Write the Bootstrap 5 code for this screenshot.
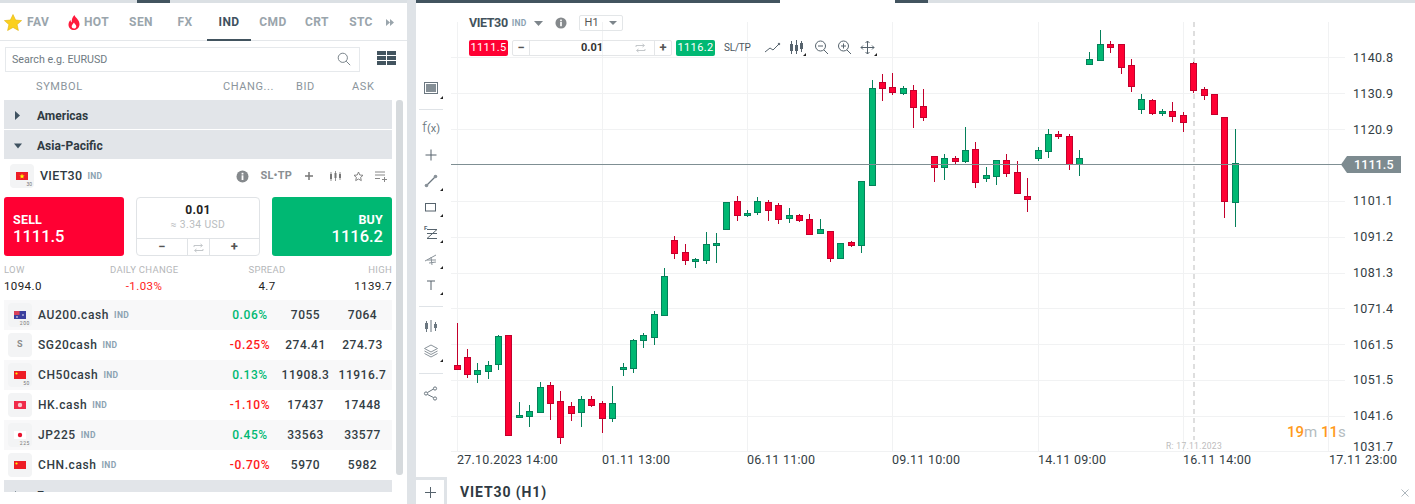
<!DOCTYPE html>
<html lang="en">
<head>
    <meta charset="UTF-8">
    <title>VIET30 (H1)</title>
    <link rel="stylesheet" href="https://cdn.jsdelivr.net/npm/bootstrap@5.3.0/dist/css/bootstrap.min.css">
    <style>
        html, body { height: 504px; overflow: hidden; background: #fff; }
        body { font-family: Roboto, "Liberation Sans", sans-serif; color: #2f3a42; font-size: 12px; }
        .strip { height: 3px; flex: none; }
        .s-light { background: #dbe0e4; }
        .s-dark { background: #42545f; }
        .left-side { width: 407px; flex: none; height: 504px; }
        .gutter { width: 9px; flex: none; background: #dfe3e7; }
        .right-side { width: 999px; flex: none; height: 504px; }

        .tabbar { height: 38px; border-bottom: 1px solid #e4e7ea; }
        .tab-item { height: 38px; font-size: 12px; font-weight: 700; color: #9aa5ac; letter-spacing: .4px; width: 44px; padding: 0; justify-content: center; }
        .tab-item.on { color: #3f5260; border-bottom: 2px solid #42545f; padding-top: 2px; height: 38px; }
        .tab-fav { width: 60px; justify-content: flex-start; padding-left: 4px; gap: 5px; }
        .tab-hot { width: 59px; justify-content: flex-start; padding-left: 8px; gap: 4px; }
        .tab-more { width: 14px; }
        .search-row { height: 31px; padding: 6px 11px 0 5px; }
        .search-box { width: 355px; height: 25px; }
        .search-box .form-control { height: 25px; border-radius: 0; border: 1px solid #e6e9ec; font-size: 10.7px; padding: 0 6px; color: #6c757d; box-shadow: none; }
        .search-box .form-control::placeholder { color: #6f7a82; }
        .search-icon { position: absolute; right: 9px; top: 5px; }
        .col-heads { height: 28px; font-size: 11px; letter-spacing: .6px; color: #8b959c; padding-top: 3px; }
        .head-symbol { width: 223px; padding-left: 36px; }
        .head-change { width: 60px; }
        .head-bid { width: 62px; padding-left: 13px; }
        .head-ask { padding-left: 7px; }

        .list-wrap { height: 392px; padding-left: 4px; overflow: hidden; }
        .list-col { width: 388px; flex: none; }
        .thumb { width: 7px; height: 375px; margin-left: 4px; background: #d6dadd; border-radius: 3px; flex: none; }
        .group-row { height: 29px; margin-bottom: 1px; background: #e2e5e9; font-size: 12px; font-weight: 700; color: #2f3a42; padding: 2px 0 0 10px; }
        .group-row svg { width: 8px; margin-right: 15px; }
        .box-ic { width: 24px; height: 24px; border-radius: 4px; background: #f3f4f5; position: relative; flex: none; display: flex; align-items: center; justify-content: center; color: #8c8c8c; font-size: 9px; font-weight: 700; }
        .box-ic small { position: absolute; right: 2px; bottom: 1px; font-size: 5px; font-weight: 400; color: #777; line-height: 1; }
        .detail-head { height: 30px; margin-bottom: 7px; padding: 2px 0 0 6px; }
        .detail-name { margin-left: 6px; font-size: 12.5px; font-weight: 500; letter-spacing: .3px; }
        .tag { font-size: 8.5px; font-weight: 700; color: #8ba2b2; letter-spacing: .3px; margin-left: 5px; }
        .detail-tools { margin-left: auto; padding-right: 4px; gap: 11px; color: #8a8f93; }
        .sl-tp { font-size: 11px; font-weight: 700; letter-spacing: .2px; color: #8a8f93; }
        .sl-tp + svg { margin-left: 1px; }

        .trade-row { height: 59px; }
        .deal { width: 120px; height: 59px; border: 0; border-radius: 3px; color: #fff; padding: 6px 9px 0; line-height: 1; }
        .deal b { display: block; font-size: 12.5px; font-weight: 700; letter-spacing: .2px; margin-bottom: 3px; }
        .deal span { font-size: 16.5px; font-weight: 500; }
        .deal-sell { background: #ff0033; text-align: left; }
        .deal-buy { background: #00b873; text-align: right; }
        .deal:hover { color: #fff; }
        .deal-sell:hover { background: #ff0033; }
        .deal-buy:hover { background: #00b873; }
        .qty-box { width: 124px; height: 59px; border: 1px solid #e0e3e6; border-radius: 4px; text-align: center; }
        .qty-top { height: 40px; padding-top: 6px; line-height: 1; }
        .qty-top b { display: block; font-size: 12px; font-weight: 700; color: #222; letter-spacing: .3px; margin-bottom: 2px; }
        .qty-top span { font-size: 10.3px; color: #b9bdc0; letter-spacing: .4px; }
        .qty-bottom { height: 17px; border-top: 1px solid #e0e3e6; font-size: 13px; font-weight: 700; color: #555; line-height: 16px; }
        .qty-bottom div:nth-child(1), .qty-bottom div:nth-child(3) { flex: 1; }
        .qty-bottom div:nth-child(2) { width: 23px; border-left: 1px solid #e0e3e6; border-right: 1px solid #e0e3e6; }

        .stats { height: 44px; padding-top: 9px; line-height: 1; }
        .stat-lab { font-size: 9.5px; color: #b5b7b9; letter-spacing: .3px; }
        .stat-val { font-size: 11.5px; color: #222; letter-spacing: .4px; margin-top: 6px; }
        .st-a { width: 106px; }
        .st-b { width: 68px; text-align: center; }
        .st-c { width: 40px; margin-left: 69px; text-align: center; }
        .st-d { width: 105px; text-align: right; }
        .red-txt { color: #ff1a1a; }
        .green-txt { color: #00b873; }

        .quote-row { height: 30px; padding-left: 4px; font-size: 12px; letter-spacing: .6px; color: #333d44; font-weight: 500; }
        .quote-row.tint { background: #f8f8f9; }
        .quote-name { margin-left: 6px; }
        .quote-chg { width: 54px; margin-left: auto; text-align: center; }
        .quote-px { width: 57px; text-align: center; letter-spacing: .5px; }
        .quote-px.last { margin-right: 1px; }

        .chart-row { height: 474px; }
        .tool-col { width: 35px; flex: none; padding: 72px 5px 0 0; }
        .tool-btn { height: 26px; display: flex; align-items: baseline; justify-content: center; color: #6b7780; font-size: 15px; font-weight: 300; }
        .tool-btn svg { align-self: center; flex: none; }
        .tool-btn span { font-size: 11px; font-weight: 400; }
        .tool-line { height: 1px; background: #dfe3e7; margin: 8px 3px 6px 3px; }
        .plot { width: 964px; position: relative; }
        .plot-svg { position: absolute; left: -35px; top: 0; }
        .plot-svg text { font-family: Roboto, "Liberation Sans", sans-serif; }
        .chart-head { position: relative; padding-left: 18px; }
        .head-one { height: 20px; margin-top: 10px; }
        .head-name { font-size: 12.5px; font-weight: 700; letter-spacing: -.4px; color: #43525c; }
        .head-one .tag { margin-left: 4px; }
        .head-caret { margin-left: 7px; }
        .head-info { margin-left: 12px; }
        .tf-select { width: 44px; height: 16px; margin-left: 12px; border: 1px solid #e3e6e8; border-radius: 2px; font-size: 11px; color: #555; padding: 0 5px; }
        .head-two { margin-top: 6px; height: 17px; }
        .pill { width: 39px; height: 16px; border-radius: 2px; color: #fff; font-size: 11px; font-weight: 400; letter-spacing: .4px; text-align: center; line-height: 16px; }
        .pill-red { background: #ff0033; }
        .pill-green { background: #00b873; }
        .qty-strip { width: 160px; height: 16px; margin: 0 4px; border: 1px solid #e4e6e8; border-radius: 2px; font-size: 11px; font-weight: 700; color: #333; line-height: 14px; text-align: center; }
        .qty-strip .side { width: 17px; color: #555; font-size: 13px; }
        .qty-strip .side:first-child { border-right: 1px solid #e4e6e8; }
        .qty-strip .side:last-child { border-left: 1px solid #e4e6e8; }
        .swap-small { position: absolute; right: 8px; top: 2px; }
        .sltp-link { font-size: 10px; letter-spacing: -.2px; color: #4a5660; margin: 0 14px 0 9px; }
        .bottom-row { height: 27px; }
        .plus-tab { width: 31px; height: 27px; border-top: 3px solid #dfe3e7; border-right: 3px solid #dfe3e7; color: #56636d; }
        .bottom-name { margin-left: 13px; padding-top: 5px; font-size: 14px; font-weight: 700; letter-spacing: .9px; color: #2f3a42; }
        .bottom-x { margin-left: auto; margin-right: 6px; padding-top: 6px; color: #aeb7bd; }
    </style>
</head>
<body class="d-flex">

    <!-- left panel -->
    <div class="left-side d-flex flex-column">
        <div class="d-flex flex-none">
            <div class="strip s-light" style="width:137px"></div>
            <div class="strip s-dark" style="width:33px"></div>
            <div class="strip s-light" style="width:237px"></div>
        </div>

        <nav class="nav tabbar flex-nowrap">
            <a class="nav-link tab-item tab-fav d-flex align-items-center" href="#">
                <svg width="18" height="17" viewBox="0 0 18 17"><polygon points="9,0.5 11.6,6 17.6,6.6 13.1,10.6 14.4,16.5 9,13.4 3.6,16.5 4.9,10.6 0.4,6.6 6.4,6" fill="#fbd01e" stroke="#e3b60f" stroke-width=".6"/></svg>FAV</a>
            <a class="nav-link tab-item tab-hot d-flex align-items-center" href="#">
                <svg width="12" height="15" viewBox="0 0 12 15"><path d="M6.5 0c.6 2.6 4.9 4.6 5 9 .1 3.400-2.500 6-5.500 6S.4 12.600.5 9.400C.6 7.400 1.600 6 2.600 5c0 1.200.4 2 1.100 2.400C3.500 4.500 4.600 1.700 6.500 0zM6 7.500C5 9 3.700 10 3.700 11.600c0 1.300 1 2 2.300 2s2.300-.8 2.300-2.100C8.300 10 6.800 9.200 6 7.500z" fill="#ff1a3c"/></svg>HOT</a>
            <a class="nav-link tab-item d-flex align-items-center" href="#">SEN</a>
            <a class="nav-link tab-item d-flex align-items-center" href="#">FX</a>
            <a class="nav-link tab-item on d-flex align-items-center" href="#">IND</a>
            <a class="nav-link tab-item d-flex align-items-center" href="#">CMD</a>
            <a class="nav-link tab-item d-flex align-items-center" href="#">CRT</a>
            <a class="nav-link tab-item d-flex align-items-center" href="#">STC</a>
            <a class="nav-link tab-item tab-more d-flex align-items-center" href="#">
                <svg width="8" height="7" viewBox="0 0 8 7"><path d="M0 0l4 3.500-4 3.500zM4 0l4 3.500-4 3.500z" fill="#9aa5ac"/></svg></a>
        </nav>

        <div class="search-row d-flex justify-content-between">
            <div class="search-box position-relative">
                <input class="form-control" type="text" placeholder="Search e.g. EURUSD">
                <svg class="search-icon" width="14" height="14" viewBox="0 0 14 14" fill="none" stroke="#7b858c"><circle cx="5.800" cy="5.800" r="4.600"/><path d="M9.200 9.200l4 4"/></svg>
            </div>
            <svg class="mt-1" width="19" height="15" viewBox="0 0 19 15" fill="#42545f"><rect width="9" height="4"/><rect x="10" width="9" height="4"/><rect y="5" width="9" height="4"/><rect x="10" y="5" width="9" height="4"/><rect y="10" width="9" height="4"/><rect x="10" y="10" width="9" height="4"/></svg>
        </div>

        <div class="col-heads d-flex align-items-center">
            <div class="head-symbol">SYMBOL</div>
            <div class="head-change">CHANG...</div>
            <div class="head-bid">BID</div>
            <div class="head-ask">ASK</div>
        </div>

        <div class="list-wrap d-flex">
            <div class="list-col">
                <div class="group-row d-flex align-items-center">
                    <svg height="9" viewBox="0 0 8 9"><path d="M1 0l5 4.500-5 4.500z" fill="#3f5260"/></svg>Americas</div>
                <div class="group-row d-flex align-items-center">
                    <svg height="6" viewBox="0 0 8 6"><path d="M0 .5h8l-4 5z" fill="#3f5260"/></svg>Asia-Pacific</div>

                <div class="detail-head d-flex align-items-center">
                    <div class="box-ic">
                        <svg width="12" height="8" viewBox="0 0 12 8"><rect width="12" height="8" fill="#ee1c25"/><polygon points="6,1.500 6.700,3.500 8.600,3.500 7.100,4.700 7.600,6.500 6,5.400 4.400,6.500 4.900,4.700 3.400,3.500 5.300,3.500" fill="#ff0"/></svg><small>30</small></div>
                    <span class="detail-name">VIET30</span><span class="tag">IND</span>
                    <div class="detail-tools d-flex align-items-center">
                        <svg width="13" height="13" viewBox="0 0 13 13"><circle cx="6.500" cy="6.500" r="6" fill="#85898c"/><rect x="5.600" y="5.300" width="1.800" height="4.700" fill="#fff"/><rect x="5.600" y="2.800" width="1.800" height="1.700" fill="#fff"/></svg>
                        <span class="sl-tp">SL•TP</span>
                        <svg width="10" height="10" viewBox="0 0 10 10"><path d="M5 1v8M1 5h8" stroke="#777" stroke-width="1.500"/></svg>
                        <svg class="ms-1" width="13" height="11" viewBox="0 0 13 11" fill="#777"><rect x="1" y="3" width="2" height="5"/><rect x="1.600" y="1" width=".8" height="9"/><rect x="5.500" y="2" width="2" height="5"/><rect x="6.100" y="0" width=".8" height="10"/><rect x="10" y="3" width="2" height="4"/><rect x="10.600" y="1" width=".8" height="8"/></svg>
                        <svg width="11" height="11" viewBox="0 0 11 11"><polygon points="5.500,1 6.800,4 10,4.300 7.600,6.400 8.300,9.600 5.500,8 2.700,9.600 3.400,6.400 1,4.300 4.200,4" fill="none" stroke="#777" stroke-width=".9"/></svg>
                        <svg width="13" height="11" viewBox="0 0 13 11" fill="none" stroke="#888"><path d="M0 1h10M0 4h10M0 7.500h5M9.500 6v5M7 8.500h5"/></svg>
                    </div>
                </div>

                <div class="trade-row d-flex justify-content-between">
                    <button class="btn deal deal-sell" type="button"><b>SELL</b><span>1111.5</span></button>
                    <div class="qty-box">
                        <div class="qty-top"><b>0.01</b><span>≈ 3.34 USD</span></div>
                        <div class="qty-bottom d-flex">
                            <div>−</div>
                            <div><svg width="11" height="10" viewBox="0 0 11 10" fill="none" stroke="#c3c7ca"><path d="M1 4V2.500h8M7.500 1L9.500 2.500 7.500 4M10 6v1.500H2M3.500 6L1.500 7.500 3.500 9"/></svg></div>
                            <div>+</div>
                        </div>
                    </div>
                    <button class="btn deal deal-buy" type="button"><b>BUY</b><span>1116.2</span></button>
                </div>

                <div class="stats d-flex">
                    <div class="st-a"><div class="stat-lab">LOW</div><div class="stat-val">1094.0</div></div>
                    <div class="st-b"><div class="stat-lab text-nowrap">DAILY CHANGE</div><div class="stat-val red-txt">-1.03%</div></div>
                    <div class="st-c"><div class="stat-lab">SPREAD</div><div class="stat-val">4.7</div></div>
                    <div class="st-d"><div class="stat-lab">HIGH</div><div class="stat-val">1139.7</div></div>
                </div>

                <div class="quote-row tint d-flex align-items-center">
                    <div class="box-ic">
                        <svg width="12" height="8" viewBox="0 0 12 8"><rect width="12" height="8" fill="#3b3f9e"/><rect width="5.500" height="4" fill="#d8405a"/><circle cx="9" cy="4" r=".8" fill="#fff"/><circle cx="3" cy="6" r=".8" fill="#fff"/></svg><small>200</small></div>
                    <span class="quote-name">AU200.cash</span><span class="tag">IND</span>
                    <span class="quote-chg green-txt">0.06%</span><span class="quote-px">7055</span><span class="quote-px last">7064</span>
                </div>
                <div class="quote-row d-flex align-items-center">
                    <div class="box-ic">S</div>
                    <span class="quote-name">SG20cash</span><span class="tag">IND</span>
                    <span class="quote-chg red-txt">-0.25%</span><span class="quote-px">274.41</span><span class="quote-px last">274.73</span>
                </div>
                <div class="quote-row tint d-flex align-items-center">
                    <div class="box-ic">
                        <svg width="12" height="8" viewBox="0 0 12 8"><rect width="12" height="8" fill="#ee1c25"/><circle cx="2.500" cy="2.500" r="1.100" fill="#ff0"/></svg><small>50</small></div>
                    <span class="quote-name">CH50cash</span><span class="tag">IND</span>
                    <span class="quote-chg green-txt">0.13%</span><span class="quote-px text-nowrap">11908.3</span><span class="quote-px last text-nowrap">11916.7</span>
                </div>
                <div class="quote-row d-flex align-items-center">
                    <div class="box-ic">
                        <svg width="12" height="8" viewBox="0 0 12 8"><rect width="12" height="8" fill="#f02a48"/><circle cx="6" cy="4" r="2.200" fill="#fbc7cf"/></svg></div>
                    <span class="quote-name">HK.cash</span><span class="tag">IND</span>
                    <span class="quote-chg red-txt">-1.10%</span><span class="quote-px">17437</span><span class="quote-px last">17448</span>
                </div>
                <div class="quote-row tint d-flex align-items-center">
                    <div class="box-ic">
                        <svg width="12" height="8" viewBox="0 0 12 8"><rect width="12" height="8" fill="#fff"/><circle cx="6" cy="4" r="2.200" fill="#e8112d"/></svg><small>225</small></div>
                    <span class="quote-name">JP225</span><span class="tag">IND</span>
                    <span class="quote-chg green-txt">0.45%</span><span class="quote-px">33563</span><span class="quote-px last">33577</span>
                </div>
                <div class="quote-row d-flex align-items-center">
                    <div class="box-ic">
                        <svg width="12" height="8" viewBox="0 0 12 8"><rect width="12" height="8" fill="#ee1c25"/><circle cx="2.500" cy="2.500" r="1.100" fill="#ff0"/></svg></div>
                    <span class="quote-name">CHN.cash</span><span class="tag">IND</span>
                    <span class="quote-chg red-txt">-0.70%</span><span class="quote-px">5970</span><span class="quote-px last">5982</span>
                </div>
                <div class="group-row d-flex align-items-center">
                    <svg height="9" viewBox="0 0 8 9"><path d="M1 0l5 4.500-5 4.500z" fill="#3f5260"/></svg>Europe</div>
            </div>
            <div class="thumb"></div>
        </div>
    </div>

    <div class="gutter"></div>

    <!-- right panel -->
    <div class="right-side d-flex flex-column">
        <div class="d-flex">
            <div class="strip s-dark" style="width:364px"></div>
            <div class="strip" style="width:115px"></div>
            <div class="strip s-dark" style="width:33px"></div>
            <div class="strip s-light" style="width:487px"></div>
        </div>

        <div class="chart-row d-flex">
            <div class="tool-col">
                <div class="tool-btn"><svg width="26" height="26" viewBox="0 0 26 26"><rect x="6.500" y="7.500" width="13" height="11" fill="#fff" stroke="#6b7780"/><rect x="8" y="9" width="10" height="8" fill="#858f96"/><path d="M22 24h3v-3z" fill="#222"/></svg></div>
                <div class="tool-line"></div>
                <div class="tool-btn">f<span>(x)</span></div>
                <div class="tool-btn"><svg width="26" height="26" viewBox="0 0 26 26"><path d="M13 7.500v11M7.500 13h11" stroke="#56636d"/></svg></div>
                <div class="tool-btn"><svg width="26" height="26" viewBox="0 0 26 26" fill="#8a939a"><path d="M9 17l8-8" stroke="#6b7780" stroke-width="1.200"/><circle cx="8.500" cy="17.500" r="1.800"/><circle cx="17.500" cy="8.500" r="1.800"/><path d="M22 23h3v-3z" fill="#222"/></svg></div>
                <div class="tool-btn"><svg width="26" height="26" viewBox="0 0 26 26" fill="none"><rect x="7.500" y="9.500" width="10" height="7.500" stroke="#56636d"/><path d="M22 23h3v-3z" fill="#222"/></svg></div>
                <div class="tool-btn"><svg width="26" height="26" viewBox="0 0 26 26" fill="none"><text x="6" y="10" font-size="6" font-weight="700" fill="#56636d">F</text><path d="M9 9.500h10M9 13.500h10M9 18.500h10M19 9.500L9 18.500" stroke="#56636d"/><path d="M22 23h3v-3z" fill="#222"/></svg></div>
                <div class="tool-btn"><svg width="26" height="26" viewBox="0 0 26 26" fill="none"><path d="M7 15l11-6M9 14l9 0M13 11l1 8M11 17l7-1" stroke="#8a939a"/><path d="M22 23h3v-3z" fill="#222"/></svg></div>
                <div class="tool-btn"><svg width="26" height="26" viewBox="0 0 26 26" fill="none"><path d="M9 9h8M13 9v9" stroke="#56636d"/><path d="M22 23h3v-3z" fill="#222"/></svg></div>
                <div class="tool-line"></div>
                <div class="tool-btn"><svg width="26" height="26" viewBox="0 0 26 26" fill="none" stroke="#6b7780"><rect x="7.500" y="10.500" width="2" height="5"/><path d="M8.500 8v11M13 7v12M17.500 9v9"/><rect x="16.500" y="11.500" width="2" height="3"/></svg></div>
                <div class="tool-btn"><svg width="26" height="26" viewBox="0 0 26 26" fill="none" stroke="#8a939a"><path d="M13 6l6.500 3.500L13 13 6.500 9.500zM6.500 12L13 15.500 19.500 12M6.500 14.500L13 18l6.500-3.500"/><path d="M22 23h3v-3z" fill="#222" stroke="none"/></svg></div>
                <div class="tool-line"></div>
                <div class="tool-btn"><svg width="26" height="26" viewBox="0 0 26 26" fill="none" stroke="#6b7780"><path d="M9.500 12.500l6-3.500M9.500 14.500l6 3"/><circle cx="8" cy="13.500" r="1.600"/><circle cx="17" cy="8.500" r="1.600"/><circle cx="17" cy="18.500" r="1.600"/></svg></div>
            </div>

            <div class="plot">
                <svg id="plotSvg" class="plot-svg" width="999" height="474" viewBox="416 3 999 474"></svg>

                <div class="chart-head">
                    <div class="head-one d-flex align-items-center">
                        <span class="head-name">VIET30</span><span class="tag">IND</span>
                        <svg class="head-caret" width="9" height="5" viewBox="0 0 9 5"><path d="M0 0h9L4.500 5z" fill="#7d858b"/></svg>
                        <svg class="head-info" width="12" height="12" viewBox="0 0 13 13"><circle cx="6.500" cy="6.500" r="6" fill="#85898c"/><rect x="5.600" y="5.300" width="1.800" height="4.700" fill="#fff"/><rect x="5.600" y="2.800" width="1.800" height="1.700" fill="#fff"/></svg>
                        <div class="tf-select d-flex align-items-center justify-content-between">H1<svg width="8" height="4" viewBox="0 0 8 4"><path d="M0 0h8L4 4z" fill="#7d858b"/></svg></div>
                    </div>
                    <div class="head-two d-flex align-items-center">
                        <div class="pill pill-red">1111.5</div>
                        <div class="qty-strip d-flex">
                            <div class="side">−</div>
                            <div class="flex-grow-1 position-relative">0.01<svg class="swap-small" width="11" height="10" viewBox="0 0 11 10" fill="none" stroke="#c3c7ca"><path d="M1 4V2.500h8M7.500 1L9.500 2.500 7.500 4M10 6v1.500H2M3.500 6L1.500 7.500 3.500 9"/></svg></div>
                            <div class="side">+</div>
                        </div>
                        <div class="pill pill-green">1116.2</div>
                        <span class="sltp-link">SL/TP</span>
                        <svg width="16" height="12" viewBox="0 0 16 12" fill="none" stroke="#56636d"><path d="M0 10l5-4 3 2 6-6"/><circle cx="14" cy="2" r=".8" fill="#56636d"/></svg>
                        <svg class="ms-2" width="17" height="16" viewBox="0 0 17 16" fill="none" stroke="#56636d"><rect x="1.500" y="4.500" width="2" height="6"/><path d="M2.500 1v13M7.500 0v14M12.500 1v11"/><rect x="6.500" y="5.500" width="2" height="5"/><rect x="11.500" y="3.500" width="2" height="5"/><path d="M14 16h3v-3z" fill="#222" stroke="none"/></svg>
                        <svg class="ms-2" width="15" height="15" viewBox="0 0 15 15" fill="none" stroke="#56636d"><circle cx="6.500" cy="6" r="5"/><path d="M10 10l4 4M4 6h5"/></svg>
                        <svg class="ms-2" width="15" height="15" viewBox="0 0 15 15" fill="none" stroke="#56636d"><circle cx="6.500" cy="6" r="5"/><path d="M10 10l4 4M4 6h5M6.500 3.500v5"/></svg>
                        <svg class="ms-2" width="17" height="16" viewBox="0 0 17 16" fill="none" stroke="#56636d"><path d="M7.500 1v13M1 7.500h13M5.500 3l2-2 2 2M5.500 12l2 2 2-2M3 5.500l-2 2 2 2M12 5.500l2 2-2 2"/><path d="M14 16h3v-3z" fill="#222" stroke="none"/></svg>
                    </div>
                </div>
            </div>
        </div>

        <div class="bottom-row d-flex">
            <div class="plus-tab d-flex align-items-center justify-content-center">
                <svg width="11" height="11" viewBox="0 0 11 11"><path d="M5.500 0v11M0 5.500h11" stroke="#56636d"/></svg>
            </div>
            <div class="bottom-name">VIET30 (H1)</div>
            <div class="bottom-x"><svg width="8" height="8" viewBox="0 0 8 8"><path d="M.5.5l7 7M7.500.5l-7 7" stroke="#aeb7bd"/></svg></div>
        </div>
    </div>

    <script src="https://cdn.jsdelivr.net/npm/bootstrap@5.3.0/dist/js/bootstrap.bundle.min.js"></script>
    <script>
        // x, wick top, wick bottom, body top, body bottom, colour
        var candles = [
            [457,323,370,365,370,"r"],[467,349,378,357,375,"r"],[477,363,383,370,375,"g"],[488,361,379,365,372,"g"],
            [498,335,370,336,365,"g"],[508,335,436,335,436,"r"],[519,402,418,415,418,"g"],[529,405,427,411,417,"g"],
            [540,382,413,387,413,"g"],[550,382,420,385,404,"r"],[560,391,444,401,438,"r"],[571,402,421,406,414,"r"],
            [581,396,427,399,413,"g"],[591,396,407,399,406,"r"],[602,401,433,403,419,"r"],[612,386,422,403,419,"g"],
            [623,363,376,367,370,"g"],[633,339,373,340,369,"g"],[643,333,348,335,341,"g"],[654,311,345,314,338,"g"],
            [664,268,316,276,316,"g"],[674,236,259,240,254,"r"],[685,244,265,252,261,"r"],[695,258,268,259,262,"g"],
            [706,232,264,244,261,"g"],[716,233,263,243,246,"g"],[726,202,230,202,230,"g"],[737,196,221,201,216,"r"],
            [747,210,217,213,216,"g"],[757,197,215,201,213,"g"],[768,200,221,202,211,"r"],[778,203,224,205,220,"r"],
            [789,208,223,215,219,"g"],[799,214,222,215,221,"r"],[809,214,235,219,235,"r"],[820,219,234,229,234,"g"],
            [830,231,262,231,259,"r"],[840,243,259,243,259,"g"],[851,241,247,242,246,"r"],[861,181,253,181,246,"g"],
            [872,80,186,88,186,"g"],[882,74,101,82,89,"r"],[892,73,95,87,93,"r"],[903,86,95,88,94,"g"],
            [913,85,128,90,108,"r"],[923,89,121,106,118,"r"],[934,156,182,156,168,"r"],[944,154,180,158,168,"g"],
            [955,156,164,158,162,"r"],[965,127,163,150,162,"g"],[975,142,188,149,183,"r"],[986,167,182,175,179,"g"],
            [996,160,185,160,177,"g"],[1006,154,177,160,174,"r"],[1017,161,194,172,194,"r"],[1027,178,212,196,200,"r"],
            [1038,147,161,150,159,"g"],[1048,129,158,134,152,"g"],[1058,131,139,134,137,"r"],[1069,134,170,136,165,"r"],
            [1079,150,176,158,165,"g"],[1089,52,65,59,65,"g"],[1100,30,61,44,61,"g"],[1110,41,53,44,48,"r"],
            [1121,44,74,44,68,"r"],[1131,59,92,65,87,"r"],[1141,94,114,99,110,"g"],[1152,99,115,100,114,"r"],
            [1162,109,116,111,114,"g"],[1172,102,122,111,117,"r"],[1183,112,132,115,123,"r"],[1193,62,93,63,91,"r"],
            [1204,87,100,89,96,"r"],[1214,94,115,94,115,"r"],[1224,117,218,117,202,"r"],[1235,129,227,163,203,"g"]
        ];
        var priceLabels = [[1140.8,58],[1130.9,94],[1120.9,130],[1101.1,201],[1091.2,237],[1081.3,273],[1071.4,309],[1061.5,345],[1051.5,380],[1041.6,416],[1031.7,447]];
        var dateLabels = [["27.10.2023 14:00",457],["01.11 13:00",602],["06.11 11:00",747],["09.11 10:00",892],["14.11 09:00",1038],["16.11 14:00",1183],["17.11 23:00",1329]];

        var html = "";
        [457,602,747,892,1038,1183,1328].forEach(function (x) {
            html += '<path d="M' + (x + .5) + ' 22V451" stroke="#f1f2f3"/>';
        });
        [57,93,129,201,237,273,308,344,380,416,451].forEach(function (y) {
            html += '<path d="M451 ' + (y + .5) + 'H1345" stroke="#f1f2f3"/>';
        });
        html += '<path d="M1194 22V440" stroke="#dedede" stroke-width="2" stroke-dasharray="5 4"/>';

        candles.forEach(function (c) {
            var red = c[5] === "r";
            var edge = red ? "#c2002c" : "#05805a";
            var x = c[0] + .5;
            if (c[1] < c[3] || c[2] > c[4]) {
                html += '<path d="M' + x + ' ' + c[1] + 'V' + c[2] + '" stroke="' + edge + '"/>';
            }
            html += '<rect x="' + (x - 3) + '" y="' + (c[3] + .5) + '" width="6" height="' + (c[4] - c[3] - 1) + '" fill="' + (red ? "#ff0033" : "#00b873") + '" stroke="' + edge + '"/>';
        });

        html += '<path d="M451 164.500H1345" stroke="#7f8f93"/>';
        html += '<polygon points="1341,164.500 1347,156 1401,156 1401,173 1347,173" fill="#7d8b90"/>';
        html += '<text x="1354" y="169" fill="#fff" font-size="12.500" font-weight="500" letter-spacing=".1">1111.5</text>';
        priceLabels.forEach(function (p) {
            html += '<text x="1353" y="' + (p[1] + 4) + '" fill="#333d44" font-size="12.500" letter-spacing=".3">' + p[0].toFixed(1) + '</text>';
        });
        dateLabels.forEach(function (d) {
            html += '<text x="' + d[1] + '" y="464" fill="#333d44" font-size="12.500" letter-spacing=".25">' + d[0] + '</text>';
        });
        html += '<text x="1166" y="449" fill="#bcbcbc" font-size="8.500" letter-spacing=".3">R: 17.11.2023</text>';
        html += '<text x="1287" y="437" font-size="15" font-weight="500" fill="#ff9a1a">19<tspan fill="#b4bcc0" font-weight="400">m </tspan>11<tspan fill="#b4bcc0" font-weight="400">s</tspan></text>';
        document.getElementById("plotSvg").innerHTML = html;
    </script>
</body>
</html>
